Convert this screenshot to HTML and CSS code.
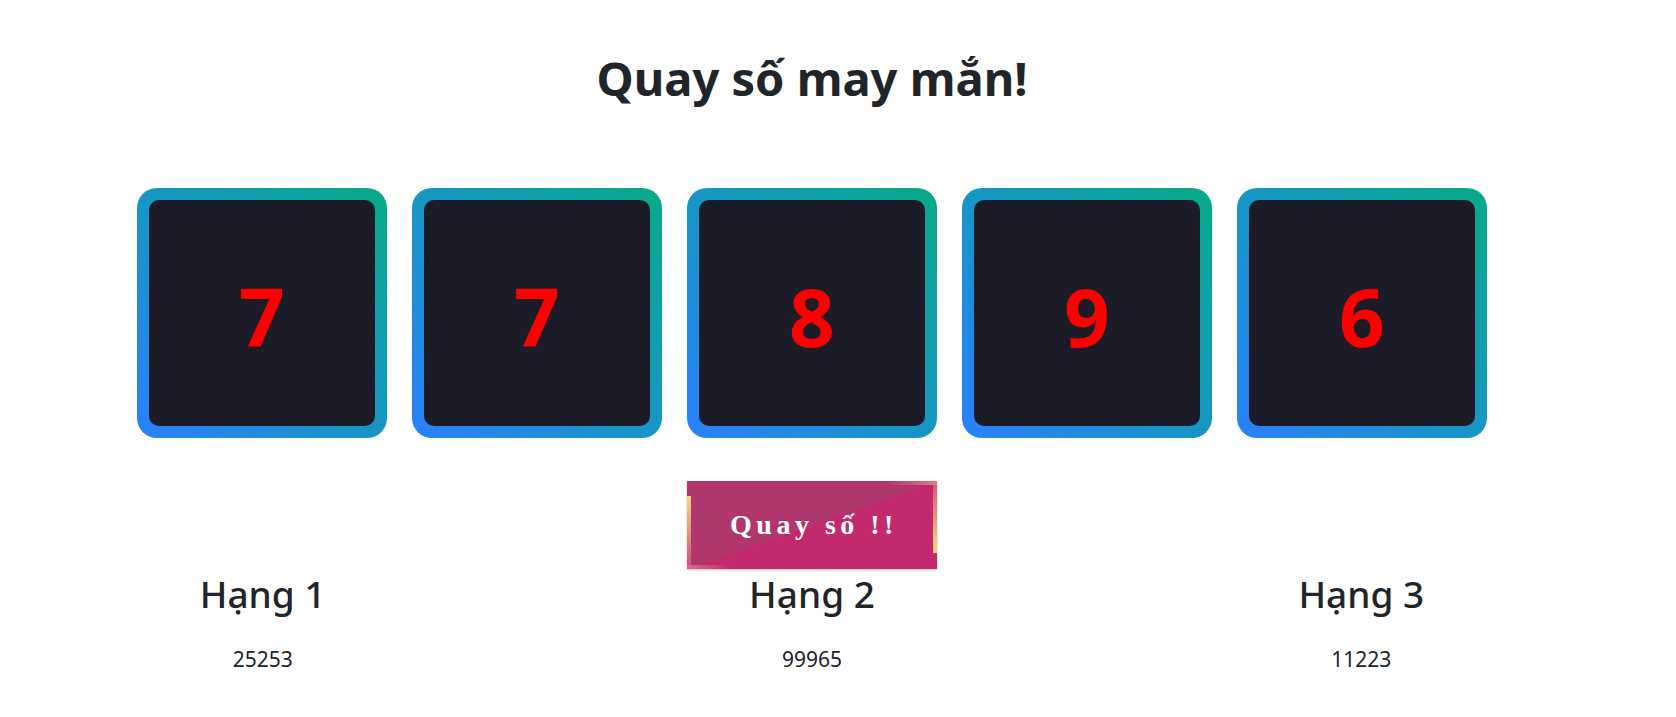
FILE: index.html
```html
<!DOCTYPE html>
<html lang="vi">
<head>
<meta charset="utf-8">
<title>Quay số may mắn</title>
<link rel="stylesheet" href="styles.css">
</head>
<body>
<div class="page">
  <h1 class="title">Quay số may mắn!</h1>
  <div class="slots">
    <div class="slot"><div class="slot-inner">7</div></div>
    <div class="slot"><div class="slot-inner">7</div></div>
    <div class="slot"><div class="slot-inner">8</div></div>
    <div class="slot"><div class="slot-inner">9</div></div>
    <div class="slot"><div class="slot-inner">6</div></div>
  </div>
  <div class="actions">
    <button class="spin-btn" type="button">
      <span class="edge edge-top"></span>
      <span class="edge edge-right"></span>
      <span class="edge edge-bottom"></span>
      <span class="edge edge-left"></span>
      <span class="spin-label">Quay số !!</span>
    </button>
  </div>
  <div class="results">
    <div class="result">
      <h2 class="result-title">Hạng 1</h2>
      <p class="result-number">25253</p>
    </div>
    <div class="result">
      <h2 class="result-title">Hạng 2</h2>
      <p class="result-number">99965</p>
    </div>
    <div class="result">
      <h2 class="result-title">Hạng 3</h2>
      <p class="result-number">11223</p>
    </div>
  </div>
</div>
</body>
</html>
```
FILE: styles.css
```css
* { box-sizing: border-box; }

html, body {
  margin: 0;
  padding: 0;
  background: #ffffff;
}

body {
  font-family: "Noto Sans", "Open Sans", sans-serif;
  color: #212529;
}

.page {
  width: 1624px;
}

.title {
  margin: 48px 0 0;
  font-size: 47px;
  line-height: 60px;
  font-weight: 700;
  text-align: center;
  color: #212529;
}

.slots {
  margin-top: 80px;
  display: flex;
  justify-content: center;
  gap: 25px;
}

.slot {
  width: 250px;
  height: 250px;
  padding: 12px;
  border-radius: 20px;
  background: linear-gradient(45deg, #2b80fb 0%, #1796c4 50%, #07aa87 100%);
}

.slot-inner {
  height: 100%;
  border-radius: 10px;
  background: #1b1c27;
  display: flex;
  align-items: center;
  justify-content: center;
  padding-top: 6px;
  color: #ff0000;
  font-size: 80px;
  line-height: 1;
  font-weight: 700;
}

.actions {
  margin-top: 43px;
  display: flex;
  justify-content: center;
}

.spin-btn {
  position: relative;
  width: 250px;
  height: 88px;
  border: 0;
  padding: 0;
  overflow: hidden;
  background: linear-gradient(to bottom right, #b0376d 50%, #c22a6d 50%);
  box-shadow: 0 1px 2px rgba(0, 0, 0, 0.25);
  cursor: pointer;
}

.spin-label {
  display: block;
  padding-left: 4px;
  font-family: "Liberation Serif", "Times New Roman", serif;
  font-weight: 700;
  font-size: 28px;
  letter-spacing: 4.5px;
  color: #ffffff;
}

.edge {
  position: absolute;
  display: block;
}

.edge-top {
  top: 0;
  right: 0;
  width: 50px;
  height: 4px;
  background: linear-gradient(to right, rgba(226, 110, 130, 0), #df7a86);
}

.edge-right {
  top: 0;
  right: 0;
  width: 4px;
  height: 72px;
  background: linear-gradient(to bottom, rgba(226, 110, 130, 0.6), #f6d97c);
}

.edge-bottom {
  bottom: 0;
  left: 0;
  width: 45px;
  height: 4px;
  background: linear-gradient(to right, #d96a88, rgba(217, 106, 136, 0));
}

.edge-left {
  bottom: 4px;
  left: 0;
  width: 4px;
  height: 69px;
  background: linear-gradient(to bottom, #f6d97c, rgba(217, 106, 136, 0.6));
}

.results {
  margin: 2px -12px 0;
  display: grid;
  grid-template-columns: repeat(3, 1fr);
  text-align: center;
}

.result-title {
  margin: 0;
  font-size: 37px;
  line-height: 46px;
  font-weight: 500;
}

.result-number {
  margin: 27px 0 0;
  font-size: 21px;
  line-height: 30px;
}
```
